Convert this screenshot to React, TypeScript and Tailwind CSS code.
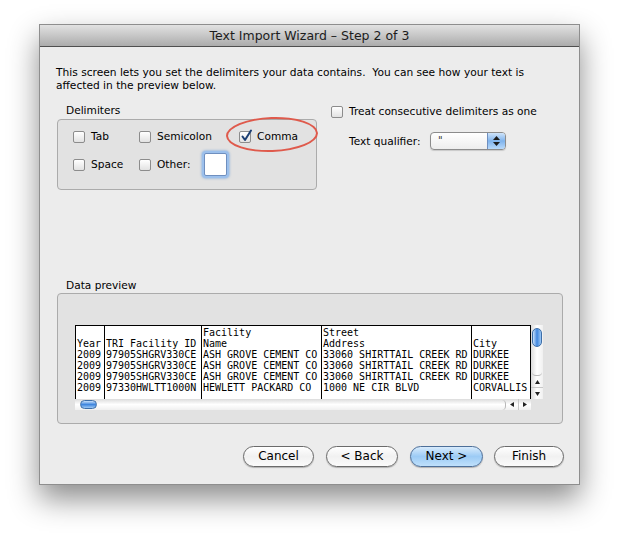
import React from 'react'

const ui = { fontFamily: '"DejaVu Sans", "Liberation Sans", sans-serif' }
const mono = { fontFamily: '"DejaVu Sans Mono", "Liberation Mono", monospace' }

function CheckBox({ checked = false }: { checked?: boolean }) {
  return (
    <span className="relative inline-block w-[12px] h-[12px] rounded-[2px] border border-[#8c8c8c] bg-gradient-to-b from-white to-[#e2e2e2] shrink-0">
      {checked && (
        <svg className="absolute left-[0px] top-[-3px]" width="13" height="14" viewBox="0 0 13 14">
          <path d="M2.5 7.5 L5 11 L11 1.5" fill="none" stroke="#1d3f73" strokeWidth="2" strokeLinecap="round" strokeLinejoin="round" />
        </svg>
      )}
    </span>
  )
}

function Check({ label, checked, w }: { label: string; checked?: boolean; w: string }) {
  return (
    <div className={`flex items-center gap-[6px] ${w}`}>
      <CheckBox checked={checked} />
      <span className="text-[10.6px] leading-[13px] text-black">{label}</span>
    </div>
  )
}

function PillButton({ label, w, primary }: { label: string; w: string; primary?: boolean }) {
  return (
    <button
      type="button"
      className={[
        'h-[21px] rounded-full border text-[12px] leading-[19px] text-black shadow-[0_1px_1px_rgba(0,0,0,0.25)]',
        w,
        primary
          ? 'border-[#4d6f99] bg-gradient-to-b from-[#d8ebfc] via-[#9ccbf5] to-[#bfe0fb]'
          : 'border-[#6b6b6b] bg-gradient-to-b from-white via-[#f1f1f1] to-[#fbfbfb]',
      ].join(' ')}
    >
      {label}
    </button>
  )
}

const columns: { w: string; lines: string[] }[] = [
  { w: 'w-[29px]', lines: ['', 'Year', '2009', '2009', '2009', '2009'] },
  { w: 'w-[97px]', lines: ['', 'TRI Facility ID', '97905SHGRV330CE', '97905SHGRV330CE', '97905SHGRV330CE', '97330HWLTT1000N'] },
  { w: 'w-[120px]', lines: ['Facility', 'Name', 'ASH GROVE CEMENT CO', 'ASH GROVE CEMENT CO', 'ASH GROVE CEMENT CO', 'HEWLETT PACKARD CO'] },
  { w: 'w-[150px]', lines: ['Street', 'Address', '33060 SHIRTTAIL CREEK RD', '33060 SHIRTTAIL CREEK RD', '33060 SHIRTTAIL CREEK RD', '1000 NE CIR BLVD'] },
  { w: 'w-[59px]', lines: ['', 'City', 'DURKEE', 'DURKEE', 'DURKEE', 'CORVALLIS'] },
]

export default function App() {
  return (
    <div className="w-[619px] h-[539px] bg-white pt-[24px] pl-[39px]" style={ui}>
      <div className="w-[541px] h-[461px] flex flex-col bg-[#ececec] border border-[#8e8e8e] shadow-[0_14px_28px_rgba(0,0,0,0.45)]">
        {/* Title bar */}
        <div className="h-[22px] shrink-0 flex items-center justify-center pt-[2px] bg-gradient-to-b from-[#e2e2e2] to-[#acacac] border-b border-[#4f4f4f]">
          <span className="text-[12.5px] text-[#1c1c1c]">Text Import Wizard – Step 2 of 3</span>
        </div>

        <div className="flex-1 flex flex-col pl-[16px] pr-[15px] pt-[19px] pb-[17px]">
          <p className="text-[10.65px] leading-[13px] text-black whitespace-pre">
            {'This screen lets you set the delimiters your data contains.  You can see how your text is\naffected in the preview below.'}
          </p>

          <div className="mt-[12px] flex">
            {/* Delimiters */}
            <div className="w-[260px] ml-[1px]">
              <div className="pl-[9px] text-[10.6px] leading-[13px]">Delimiters</div>
              <div className="relative mt-[2px] h-[71px] rounded-[4px] border border-[#ababab] bg-[#e2e2e2] pl-[15px] pt-[10px] flex flex-col gap-[15px]">
                <div className="flex items-center">
                  <Check label="Tab" w="w-[66px]" />
                  <Check label="Semicolon" w="w-[100px]" />
                  <Check label="Comma" checked w="w-[70px]" />
                </div>
                <div className="flex items-center">
                  <Check label="Space" w="w-[66px]" />
                  <Check label="Other:" w="w-[65px]" />
                  <span className="w-[23px] h-[23px] -my-[6px] bg-white border border-[#6f8fbf] rounded-[2px] shadow-[0_0_0_2px_#9cc0ec,0_0_2px_3px_rgba(110,160,220,0.5)]" />
                </div>
                <div className="absolute left-[168px] top-[-3px] w-[92px] h-[35px] rounded-[50%] border-[2px] border-[#df5a4c] -rotate-[2deg]" />
              </div>
            </div>

            {/* Right options */}
            <div className="ml-[14px] flex flex-col">
              <div className="mt-[1px]">
                <Check label="Treat consecutive delimiters as one" w="" />
              </div>
              <div className="mt-[14px] ml-[18px] flex items-center">
                <span className="text-[10.6px] leading-[13px] w-[81px]">Text qualifier:</span>
                <div className="w-[76px] h-[18px] flex rounded-[4px] border border-[#8c8c8c] bg-gradient-to-b from-white to-[#ededed] overflow-hidden shadow-[0_1px_1px_rgba(0,0,0,0.15)]">
                  <span className="flex-1 pl-[7px] text-[10px] leading-[16px] text-[#333]">"</span>
                  <span className="w-[18px] border-l border-[#6f8fbf] bg-gradient-to-b from-[#cfe4fa] via-[#7fb3ec] to-[#b9dafb] flex flex-col items-center justify-center gap-[2px]">
                    <svg width="7" height="4" viewBox="0 0 7 4"><path d="M0 4 L3.5 0 L7 4 Z" fill="#1c1c1c" /></svg>
                    <svg width="7" height="4" viewBox="0 0 7 4"><path d="M0 0 L3.5 4 L7 0 Z" fill="#1c1c1c" /></svg>
                  </span>
                </div>
              </div>
            </div>
          </div>

          {/* Data preview */}
          <div className="mt-[89px] pl-[10px] text-[10.6px] leading-[13px]">Data preview</div>
          <div className="mt-[1px] ml-[1px] h-[131px] w-[506px] rounded-[4px] border border-[#ababab] bg-[#e2e2e2] pl-[17px] pt-[31px]">
            <div className="flex">
              <div className="flex flex-col">
                <div className="flex h-[74px] bg-white border-t border-l border-black" style={mono}>
                  {columns.map((c, i) => (
                    <div key={i} className={`${c.w} border-r border-black pl-[1px] pt-[1px] overflow-hidden`}>
                      {c.lines.map((l, j) => (
                        <div key={j} className="h-[11px] text-[10px] leading-[11px] whitespace-pre text-black">
                          {l}
                        </div>
                      ))}
                    </div>
                  ))}
                </div>
                {/* Horizontal scrollbar */}
                <div className="h-[11px] w-[456px] flex items-center bg-gradient-to-b from-[#dcdcdc] via-white to-[#f0f0f0]">
                  <span className="ml-[5px] w-[17px] h-[9px] rounded-full border border-[#3d6ea8] bg-gradient-to-b from-[#c9e1fa] via-[#3f86de] to-[#9cc8f5]" />
                  <span className="flex-1" />
                  <span className="w-[4px] h-[10px] border-r border-[#b8b8b8] rounded-r-full" />
                  <span className="w-[12px] flex justify-center">
                    <svg width="4" height="5" viewBox="0 0 4 5"><path d="M4 0 L0 2.5 L4 5 Z" fill="#222" /></svg>
                  </span>
                  <span className="w-[1px] h-[11px] bg-[#c8c8c8]" />
                  <span className="w-[12px] flex justify-center">
                    <svg width="4" height="5" viewBox="0 0 4 5"><path d="M0 0 L4 2.5 L0 5 Z" fill="#222" /></svg>
                  </span>
                </div>
              </div>
              {/* Vertical scrollbar */}
              <div className="w-[12px] h-[74px] flex flex-col items-center bg-gradient-to-r from-[#dcdcdc] via-white to-[#f0f0f0]">
                <span className="mt-[3px] w-[10px] h-[19px] rounded-full border border-[#3d6ea8] bg-gradient-to-r from-[#c9e1fa] via-[#3f86de] to-[#9cc8f5]" />
                <span className="flex-1" />
                <span className="w-[10px] h-[4px] border-b border-[#b8b8b8] rounded-b-full" />
                <span className="h-[11px] flex items-center">
                  <svg width="5" height="4" viewBox="0 0 5 4"><path d="M0 4 L2.5 0 L5 4 Z" fill="#222" /></svg>
                </span>
                <span className="w-[12px] h-[1px] bg-[#c8c8c8]" />
                <span className="h-[11px] flex items-center">
                  <svg width="5" height="4" viewBox="0 0 5 4"><path d="M0 0 L2.5 4 L5 0 Z" fill="#222" /></svg>
                </span>
              </div>
            </div>
          </div>

          {/* Buttons */}
          <div className="mt-auto flex justify-end items-center">
            <PillButton label="Cancel" w="w-[71px]" />
            <div className="w-[12px]" />
            <PillButton label="< Back" w="w-[72px]" />
            <div className="w-[12px]" />
            <PillButton label="Next >" w="w-[73px]" primary />
            <div className="w-[11px]" />
            <PillButton label="Finish" w="w-[70px]" />
          </div>
        </div>
      </div>
    </div>
  )
}
